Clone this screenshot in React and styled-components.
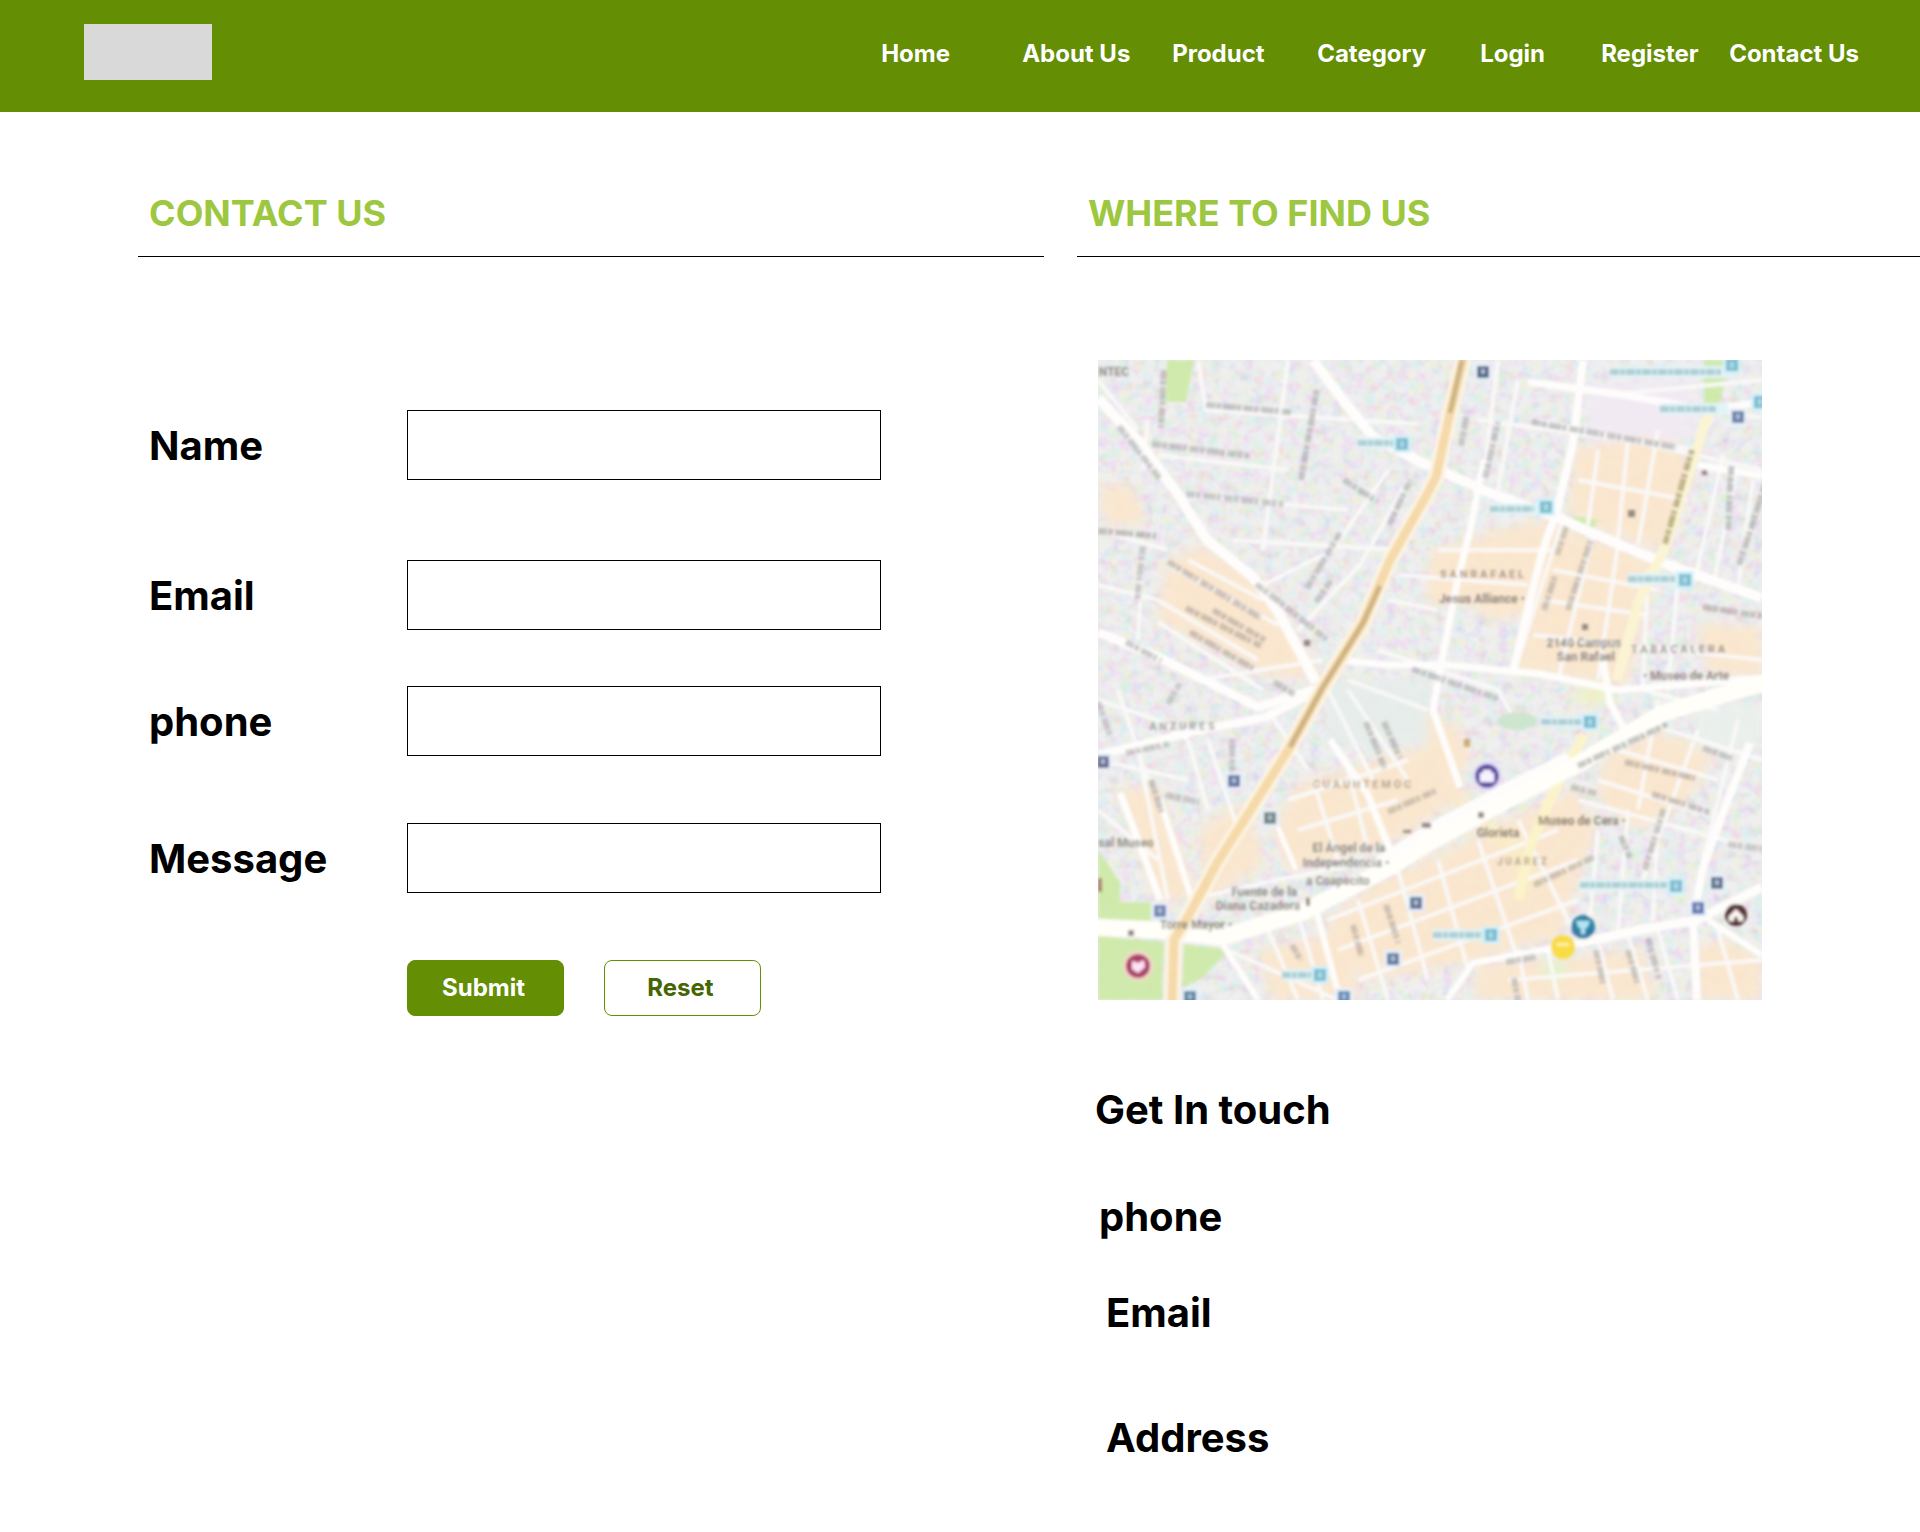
import React from "react";
import styled, { createGlobalStyle } from "styled-components";

const GlobalStyle = createGlobalStyle`
  *, *::before, *::after { box-sizing: border-box; }
  body {
    margin: 0;
    background: #ffffff;
    color: #000000;
    font-family: Inter, "Liberation Sans", sans-serif;
  }
`;

const Header = styled.header`
  display: flex;
  align-items: flex-start;
  justify-content: space-between;
  height: 112px;
  padding: 24px 61px 0 84px;
  background: #648e04;
`;

const Logo = styled.a`
  flex: none;
  width: 128px;
  height: 56px;
  background: #d9d9d9;
`;

const Nav = styled.nav`
  display: grid;
  grid-template-columns: 141px 150px 145px 163px 121px 128px auto;
  padding-top: 16px;
`;

const NavLink = styled.a`
  color: #ffffff;
  font-size: 24px;
  font-weight: 700;
  line-height: 28px;
  text-decoration: none;
  white-space: nowrap;
`;

const Main = styled.main`
  display: grid;
  grid-template-columns: 906fr 843fr;
  column-gap: 33px;
  align-items: start;
  padding: 79px 0 71px 138px;
`;

const SectionTitle = styled.h1`
  margin: 0;
  padding: 0 0 21px 11px;
  border-bottom: 1px solid #000000;
  color: #9dc740;
  font-size: 36px;
  font-weight: 700;
  line-height: 44px;
`;

const Form = styled.form`
  padding: 153px 0 0 11px;
`;

const Field = styled.div`
  display: grid;
  grid-template-columns: 258px minmax(0, 474px);
  align-items: center;
  margin-bottom: ${(p) => p.$gap}px;
`;

const Label = styled.label`
  padding-top: 2px;
  font-size: 40px;
  font-weight: 700;
  line-height: 48px;
`;

const Input = styled.input`
  width: 100%;
  height: 70px;
  padding: 0 16px;
  border: 1px solid #000000;
  border-radius: 0;
  background: #ffffff;
  font: inherit;
  font-size: 24px;
`;

const Actions = styled.div`
  display: flex;
  gap: 40px;
  padding-left: 258px;
`;

const Button = styled.button`
  width: 157px;
  height: 56px;
  padding: 0 4px 2px 0;
  border: 1px solid #648e04;
  border-radius: 8px;
  background: ${(p) => (p.$primary ? "#648e04" : "#ffffff")};
  color: ${(p) => (p.$primary ? "#ffffff" : "#466504")};
  font: inherit;
  font-size: 24px;
  font-weight: 700;
  cursor: pointer;
`;

const MapFrame = styled.figure`
  max-width: 664px;
  margin: 103px 0 0 21px;
`;

const MapSvg = styled.svg`
  display: block;
  width: 100%;
  height: auto;
`;

const Touch = styled.section`
  padding: 86px 0 0 1px;
`;

const TouchItem = styled.h2`
  margin: 0 0 ${(p) => p.$gap}px;
  padding-left: ${(p) => p.$indent}px;
  font-size: 40px;
  font-weight: 700;
  line-height: 48px;
`;

const links = ["Home", "About Us", "Product", "Category", "Login", "Register", "Contact Us"];

const fields = [
  { id: "name", label: "Name", type: "text", gap: 80 },
  { id: "email", label: "Email", type: "email", gap: 56 },
  { id: "phone", label: "phone", type: "tel", gap: 67 },
  { id: "message", label: "Message", type: "text", gap: 67 },
];

const touchItems = [
  { text: "Get In touch", gap: 59, indent: 17 },
  { text: "phone", gap: 48, indent: 21 },
  { text: "Email", gap: 77, indent: 28 },
  { text: "Address", gap: 0, indent: 28 },
];

// Built-up blocks
const blocks = [
  "70,200 105,184 165,225 190,262 222,318 170,316 110,285 58,262",
  "477,87 560,76 596,100 566,190 520,178 470,155",
  "332,190 440,160 562,202 548,250 530,325 415,312 432,252 395,262 372,245 328,245",
  "598,262 664,268 664,318 610,312",
  "198,425 320,388 372,432 300,480 190,512 176,470",
  "270,528 420,456 478,428 498,470 480,520 462,575 380,600 268,622 228,560",
  "505,398 560,372 618,392 590,440 540,470 500,440",
  "596,588 628,578 664,600 664,640 602,640",
  "20,430 60,425 98,535 60,545",
  "100,470 150,440 165,505 110,540",
  "380,605 440,600 545,590 560,640 375,640",
  "160,590 225,575 250,560 262,640 175,640",
  "330,350 362,368 374,400 350,425 325,392",
  "0,125 35,125 48,165 8,165",
];

const greens = [
  "69,0 96,0 88,42 68,42",
  "0,490 22,522 22,542 54,542 54,561 0,561",
  "0,576 66,582 64,640 0,640",
  "86,584 132,590 104,618 84,628",
  "606,0 632,0 620,50 606,50",
  "475,156 500,160 494,170 472,166",
];

const minorRoads = [
  "M0 20L40 70M50 60L45 110M60 95L190 110M100 0L108 50L320 64M190 0L165 190",
  "M80 135L250 150M135 180L300 190M290 110L235 190L165 225M310 120L262 205L200 270",
  "M0 170L70 190M45 185L40 280M0 225L60 240L160 300M70 205L180 265M90 200L165 240",
  "M60 262L165 330M100 320L225 300M250 320L330 350M230 330L275 420M250 330L310 420",
  "M280 290L400 330L420 365M290 240L340 250M300 215L430 225M340 190L455 190",
  "M400 0L385 120M420 20L400 130M432 23L520 34L664 20M440 60L664 110M380 60L600 90",
  "M500 90L490 165M530 80L520 180M560 70L540 185M480 120L590 140M620 50L664 58M605 105L664 115",
  "M640 105L615 225M625 95L598 215M655 120L640 230M465 160L420 300M495 175L460 320M520 185L500 320",
  "M455 210L560 230M445 240L548 255M435 275L664 300M550 210L545 330L620 350M580 220L570 330",
  "M0 340L60 360L90 380M20 330L50 420M0 400L90 420M40 390L70 540M90 380L110 450M110 380L140 470",
  "M0 450L60 500M170 350L210 410M190 440L310 400M200 470L300 440M215 420L240 500M250 410L270 490",
  "M540 360L664 400M520 390L620 420M500 420L610 455M560 340L540 450M600 370L545 520M640 360L600 520",
  "M480 440L664 490M500 470L490 580M530 450L520 570M560 460L555 560M420 460L480 580M380 480L420 600M340 500L370 610",
  "M300 510L330 620M260 540L290 640M230 560L460 470M240 590L480 500M260 620L480 540",
  "M420 590L430 640M450 590L460 640M500 580L515 640M530 575L550 640M560 570L580 640M620 570L640 640M410 620L664 600",
  "M130 590L240 640M170 570L200 640M200 555L225 640M90 540L180 520L280 500",
];

const mainRoads = [
  { d: "M0 38L42 83L79 133L109 180L155 217L179 250L218 322", w: 10 },
  { d: "M0 272L60 297L102 318L160 347L225 327", w: 9 },
  { d: "M0 395L102 370L169 357L220 330", w: 8 },
  { d: "M215 0L245 40L275 77L325 103L392 133L459 157L492 172L565 203L664 238", w: 10 },
  { d: "M485 0L475 83L459 150L445 190L432 240L415 312", w: 8 },
  { d: "M386 100L372 170L359 223L342 310L335 350L362 427", w: 7 },
  { d: "M240 300L290 305L349 305L442 314L520 330L664 318", w: 7 },
  { d: "M430 22L520 34L610 50L664 42", w: 7 },
  { d: "M600 105L664 116", w: 7 },
  { d: "M505 300L512 343L534 384", w: 7 },
  { d: "M652 383L625 453L605 507L595 560L599 640", w: 8 },
  { d: "M482 583L540 570L599 560L664 527", w: 9 },
  { d: "M610 560L664 595", w: 6 },
  { d: "M22 433L40 480L62 540", w: 7 },
  { d: "M62 440L78 490L98 552", w: 6 },
  { d: "M232 380L269 433L292 490", w: 7 },
  { d: "M179 465L198 510", w: 5 },
  { d: "M219 553L242 640M125 585L160 640M349 640L375 603L482 583", w: 6 },
];

// Street names too small to read: [x, y, length, angle, colour]
const streetMarks = [
  [108, 45, 86, 5, "#a2a1a2"], [54, 84, 98, 7, "#a2a1a2"], [88, 134, 98, 6, "#a2a1a2"],
  [203, 120, 92, -80, "#9e9da0"], [246, 120, 40, 33, "#a2a1a2"], [291, 165, 50, -65, "#a5a3a5"],
  [209, 228, 64, -59, "#a5a3a5"], [218, 242, 26, -55, "#a5a3a5"], [21, 66, 66, 52, "#aaa8a8"],
  [70, 202, 108, 31, "#a99a92"], [88, 248, 84, 27, "#a99a92"], [115, 250, 60, 30, "#a99a92"],
  [92, 272, 74, 30, "#a99a92"], [158, 224, 90, 38, "#a5a3a5"], [0, 171, 58, 5, "#9b918c"],
  [45, 186, 56, 96, "#a5a3a5"], [28, 282, 40, 28, "#a5a3a5"], [66, 10, 58, 93, "#a6a29c"],
  [434, 62, 146, 10, "#9e9da0"], [363, 86, 30, -80, "#a5a3a5"], [387, 118, 58, -77, "#a5a3a5"],
  [459, 195, 30, -72, "#b0a79a"], [446, 250, 36, -72, "#aaa09a"], [470, 250, 74, -72, "#aaa09a"],
  [567, 184, 98, -74, "#91804f"], [630, 170, 64, -87, "#9a999c"], [641, 205, 90, -72, "#9a999c"],
  [605, 247, 60, 9, "#a69a95"], [314, 309, 92, 19, "#a5a3a5"], [268, 362, 50, 68, "#a1a09d"],
  [286, 362, 40, 66, "#a1a09d"], [0, 342, 38, 70, "#aaaaaa"], [28, 393, 44, -12, "#aaaaaa"],
  [134, 414, 36, -90, "#a9a8ad"], [53, 420, 34, 72, "#a49d99"], [68, 435, 34, 12, "#aaaaaa"],
  [70, 344, 24, -60, "#aaaaaa"], [290, 452, 52, -24, "#ada293"], [480, 406, 98, -25, "#999b96"],
  [527, 402, 72, 13, "#a69a91"], [554, 434, 60, 18, "#a69a91"], [547, 510, 64, -73, "#a5a09c"],
  [473, 427, 26, 14, "#a5a09c"], [523, 476, 24, 68, "#9aa0a0"], [605, 388, 32, 20, "#a5a3a5"],
  [630, 484, 36, 8, "#a5a3a5"], [436, 525, 66, -25, "#aaa098"], [550, 578, 42, 75, "#a5a3a5"],
  [530, 590, 34, 74, "#a5a3a5"], [498, 590, 34, 78, "#a5a3a5"], [255, 565, 32, 75, "#ac9f95"],
  [288, 545, 40, 72, "#ac9f95"], [408, 602, 30, -10, "#a5a3a5"], [416, 618, 24, 80, "#a5a3a5"],
  [194, 585, 18, 60, "#ac9f95"], [176, 322, 24, 32, "#9fa69a"],
];

const transitMarks = [
  [260, 83, 38], [392, 149, 44], [530, 219, 50], [512, 12, 112], [562, 49, 56],
  [444, 362, 42], [482, 525, 90], [335, 575, 52], [184, 615, 32],
];

const metroStops = [
  [304, 84], [448, 147], [587, 220], [634, 5], [662, 42], [222, 615], [492, 362], [578, 526], [393, 575],
];

const busStops = [
  [385, 12, "#3c5579"], [640, 57, "#5470a0"], [5, 402, "#5a6288"], [136, 421, "#52699b"],
  [172, 458, "#65796b"], [62, 551, "#6678b0"], [318, 543, "#536188"], [295, 599, "#4f6a97"],
  [246, 637, "#4c7fb5"], [92, 637, "#427b94"], [619, 523, "#50607a"], [600, 548, "#5568aa"],
];

const places = [
  { x: 384, y: 218, t: "S A N  R A F A E L", c: "#a48f80", s: 11 },
  { x: 384, y: 243, t: "Jesus Alliance •", c: "#807872" },
  { x: 486, y: 287, t: "2140 Campus", c: "#807b79" },
  { x: 488, y: 301, t: "San Rafael", c: "#807b79" },
  { x: 580, y: 293, t: "T A B A C A L E R A", c: "#978a84", s: 11 },
  { x: 588, y: 320, t: "• Museo de Arte", c: "#8a7878" },
  { x: 84, y: 370, t: "A N Z U R E S", c: "#9a9894", s: 11 },
  { x: 264, y: 428, t: "C U A U H T E M O C", c: "#b09d8a", s: 11 },
  { x: 484, y: 465, t: "Museo de Cera •", c: "#847464" },
  { x: 400, y: 477, t: "Glorieta", c: "#81756c" },
  { x: 424, y: 505, t: "J U A R E Z", c: "#b39b80", s: 10 },
  { x: 251, y: 492, t: "El Ángel de la", c: "#85827b" },
  { x: 248, y: 507, t: "Independencia •", c: "#85827b" },
  { x: 240, y: 525, t: "a Coapecito", c: "#85827b" },
  { x: 166, y: 536, t: "Fuente de la", c: "#85827b" },
  { x: 160, y: 550, t: "Diana Cazadora", c: "#85827b" },
  { x: 98, y: 569, t: "Torre Mayor •", c: "#807b68" },
  { x: 28, y: 487, t: "sal Museo", c: "#85827b" },
  { x: 16, y: 16, t: "NTEC", c: "#85807c" },
];

function CityMap() {
  const avenue =
    "M366 -4L352 53L338 117L326 140L292 200L265 263L225 327L192 387L159 440L119 503L92 553L76 580L74 644";
  return (
    <MapSvg viewBox="0 0 664 640" role="img" aria-label="Map">
      <defs>
        <filter id="soft" x="0" y="0" width="100%" height="100%">
          <feGaussianBlur stdDeviation="1.5" />
        </filter>
        <filter id="softer" x="-5%" y="-5%" width="110%" height="110%">
          <feGaussianBlur stdDeviation="6" />
        </filter>
        <filter id="mottle" x="0" y="0" width="100%" height="100%">
          <feTurbulence type="fractalNoise" baseFrequency="0.09" numOctaves="2" seed="4" />
          <feColorMatrix values="1.6 0 0 0 0.05  0 1.6 0 0 0.05  0 0 1.6 0 0.05  0 0 0 0 1" />
        </filter>
        <clipPath id="frame">
          <rect width="664" height="640" />
        </clipPath>
      </defs>
      <rect width="664" height="640" fill="#ebebec" />
      <g clipPath="url(#frame)">
        <g filter="url(#softer)">
          {blocks.map((points) => (
            <polygon key={points} points={points} fill="#f9e4ca" />
          ))}
          <rect x="490" y="20" width="105" height="60" fill="#f0e8f2" />
          <rect x="230" y="320" width="100" height="65" fill="#e4ebe8" />
          <rect x="600" y="345" width="64" height="45" fill="#e8eeea" />
          <ellipse cx="494" cy="336" rx="20" ry="9" fill="#edf0bd" />
          <ellipse cx="456" cy="610" rx="12" ry="10" fill="#ddf3c4" />
          <path d="M360 440L420 490L430 530" stroke="#f9ecc0" strokeWidth="14" fill="none" />
        </g>
        <g filter="url(#soft)">
          {greens.map((points) => (
            <polygon key={points} points={points} fill="#cbe8a5" />
          ))}
          <g fill="none" stroke="#f9f8f7" strokeWidth="4">
            {minorRoads.map((d) => (
              <path key={d} d={d} />
            ))}
          </g>
          <g fill="none" stroke="#fefdfb" strokeLinejoin="round">
            {mainRoads.map((r) => (
              <path key={r.d} d={r.d} strokeWidth={r.w} />
            ))}
            <path d="M612 50L596 97L566 190L540 243L519 320" stroke="#fbf3cf" strokeWidth="10" />
            <path d="M486 375L452 440L432 487L420 540" stroke="#fbf2c4" strokeWidth="10" />
            <path
              d="M-4 567L60 570L125 577L205 552L292 507L332 482L415 437L482 403L565 353L668 322"
              stroke="#fffef8"
              strokeWidth="17"
            />
            <path d="M270 508L332 468L415 424L470 396" strokeWidth="9" />
            <path d={avenue} stroke="#fdf3e0" strokeWidth="16" />
            <path d={avenue} stroke="#f4d6a3" strokeWidth="9" />
            <path d="M364 0L352 53M282 226L265 263L225 327L192 387" stroke="#c8ac78" strokeWidth="5" />
          </g>
          <ellipse cx="419" cy="361" rx="20" ry="9" fill="#c9e2c9" />
          <g strokeWidth="6" strokeDasharray="9 1 5 2 13 1 4 3">
            {streetMarks.map(([x, y, len, angle, color]) => (
              <line
                key={`${x}-${y}`}
                x1="0"
                y1="0"
                x2={len}
                y2="0"
                stroke={color}
                opacity="0.6"
                transform={`translate(${x} ${y}) rotate(${angle})`}
              />
            ))}
          </g>
          {transitMarks.map(([x, y, len]) => (
            <g key={`${x}-${y}`}>
              <line x1={x} y1={y} x2={x + len + 12} y2={y} stroke="#e0f2f5" strokeWidth="12" />
              <line x1={x} y1={y} x2={x + len} y2={y} stroke="#a6cbd0" strokeWidth="6" strokeDasharray="9 1 5 1" />
            </g>
          ))}
          {metroStops.map(([x, y]) => (
            <g key={`${x}-${y}`}>
              <rect x={x - 9} y={y - 9} width="18" height="18" fill="#d0f0fa" />
              <rect x={x - 6} y={y - 6} width="12" height="12" fill="#72b4c8" />
              <rect x={x - 2} y={y - 3} width="4" height="6" fill="#a6d8e4" />
            </g>
          ))}
          {busStops.map(([x, y, color]) => (
            <g key={`${x}-${y}`}>
              <rect x={x - 9} y={y - 9} width="18" height="18" fill="#e6effa" />
              <rect x={x - 6} y={y - 6} width="12" height="12" fill={color} />
              <rect x={x - 2} y={y - 3} width="4" height="5" fill="#a9b7cf" />
            </g>
          ))}
          <g fontFamily="Roboto, sans-serif" fontWeight="700" textAnchor="middle">
            {places.map((p) => (
              <text key={p.t} x={p.x} y={p.y} fill={p.c} fontSize={p.s || 12}>
                {p.t}
              </text>
            ))}
          </g>
          <g fill="#8f8078">
            <rect x="206" y="280" width="6" height="6" />
            <rect x="530" y="150" width="7" height="7" />
            <rect x="484" y="264" width="6" height="6" />
            <rect x="604" y="110" width="5" height="5" />
            <rect x="380" y="452" width="6" height="6" />
            <rect x="366" y="379" width="6" height="8" fill="#c8a468" />
            <rect x="208" y="538" width="4" height="8" />
            <rect x="30" y="570" width="6" height="6" />
            <rect x="0" y="518" width="4" height="14" fill="#a27562" />
            <rect x="305" y="470" width="8" height="3" />
            <rect x="324" y="463" width="9" height="5" />
          </g>
          <circle cx="389" cy="416" r="15" fill="#e2ddf6" />
          <circle cx="389" cy="416" r="12" fill="#51439b" />
          <path d="M382 413h3v-3h8v3h3v9h-14z" fill="#f6f0ff" />
          <circle cx="40" cy="606" r="15" fill="#f7d2c6" />
          <circle cx="40" cy="606" r="12" fill="#a3365f" />
          <path d="M34 601l6 2l6-3l1 7l-7 6l-6-4z" fill="#ffe0f2" />
          <circle cx="465" cy="587" r="12" fill="#f8d83a" />
          <path d="M459 583h12v3h-12z" fill="#fff39b" />
          <circle cx="485" cy="567" r="12" fill="#28789f" />
          <path d="M478 561h14l-3 7h-2v6h-4v-6h-2z" fill="#a9e3f5" />
          <circle cx="638" cy="555" r="11" fill="#4a2a2b" />
          <path d="M631 556l7-7l7 7v5h-5v-4h-4v4h-5z" fill="#fff5f0" />
        </g>
        <rect width="664" height="640" filter="url(#mottle)" opacity="0.22" style={{ mixBlendMode: "soft-light" }} />
      </g>
    </MapSvg>
  );
}

export default function App() {
  return (
    <>
      <GlobalStyle />
      <Header>
        <Logo href="#" aria-label="Homepage" />
        <Nav>
          {links.map((text) => (
            <NavLink key={text} href="#">
              {text}
            </NavLink>
          ))}
        </Nav>
      </Header>
      <Main>
        <section>
          <SectionTitle>CONTACT US</SectionTitle>
          <Form onSubmit={(e) => e.preventDefault()}>
            {fields.map((f) => (
              <Field key={f.id} $gap={f.gap}>
                <Label htmlFor={f.id}>{f.label}</Label>
                <Input id={f.id} name={f.id} type={f.type} />
              </Field>
            ))}
            <Actions>
              <Button type="submit" $primary>
                Submit
              </Button>
              <Button type="reset">Reset</Button>
            </Actions>
          </Form>
        </section>
        <section>
          <SectionTitle>WHERE TO FIND US</SectionTitle>
          <MapFrame>
            <CityMap />
          </MapFrame>
          <Touch>
            {touchItems.map((item) => (
              <TouchItem key={item.text} $gap={item.gap} $indent={item.indent}>
                {item.text}
              </TouchItem>
            ))}
          </Touch>
        </section>
      </Main>
    </>
  );
}
